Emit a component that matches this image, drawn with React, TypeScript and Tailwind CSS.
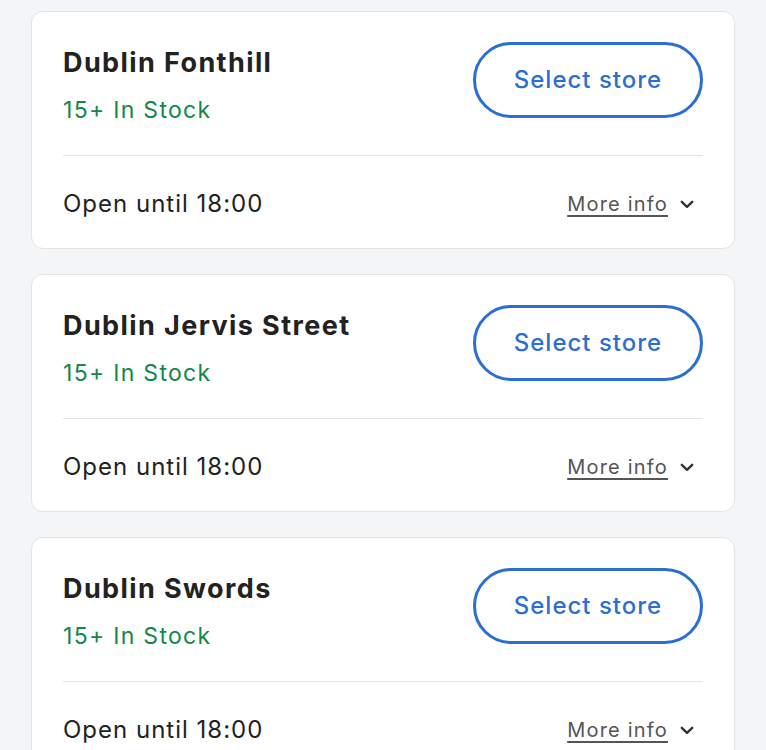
const stores = ["Dublin Fonthill", "Dublin Jervis Street", "Dublin Swords"];

function Chevron() {
  return (
    <svg width="14" height="9" viewBox="0 0 14 9" fill="none" className="text-[#333]">
      <polyline points="1.8,1.8 7,6.8 12.2,1.8" stroke="currentColor" strokeWidth="2.4" strokeLinecap="round" strokeLinejoin="round" />
    </svg>
  );
}

function StoreCard({ name }: { name: string }) {
  return (
    <div className="bg-white border border-[#e1e3e7] rounded-[12px] px-[31px]">
      <div className="flex justify-between items-start pt-[30px] pb-[31px] border-b border-[#e3e4e7]">
        <div className="pt-[7px]">
          <div className="text-[27px] font-bold text-[#222] leading-[28px] tracking-[1.4px]">{name}</div>
          <div className="text-[23px] text-[#13884a] leading-[28px] mt-[19px] tracking-[1.3px]">15+ In Stock</div>
        </div>
        <button className="w-[230px] h-[76px] rounded-full border-[3px] border-[#2c6fd1] text-[#2c6fd1] text-[24px] font-medium tracking-[1px]">
          Select store
        </button>
      </div>
      <div className="flex items-center justify-between h-[92px] pt-[4px]">
        <span className="text-[24px] text-[#222] tracking-[1px]">Open until 18:00</span>
        <span className="flex items-center gap-[12px] pr-[9px]">
          <span className="text-[20px] text-[#555] underline underline-offset-[4px] tracking-[1.2px]">More info</span>
          <Chevron />
        </span>
      </div>
    </div>
  );
}

export default function App() {
  return (
    <div className="min-h-screen bg-[#f4f5f7] px-[31px] pt-[11px] flex flex-col gap-[25px] font-['Inter',sans-serif]">
      {stores.map((s) => (
        <StoreCard key={s} name={s} />
      ))}
    </div>
  );
}
